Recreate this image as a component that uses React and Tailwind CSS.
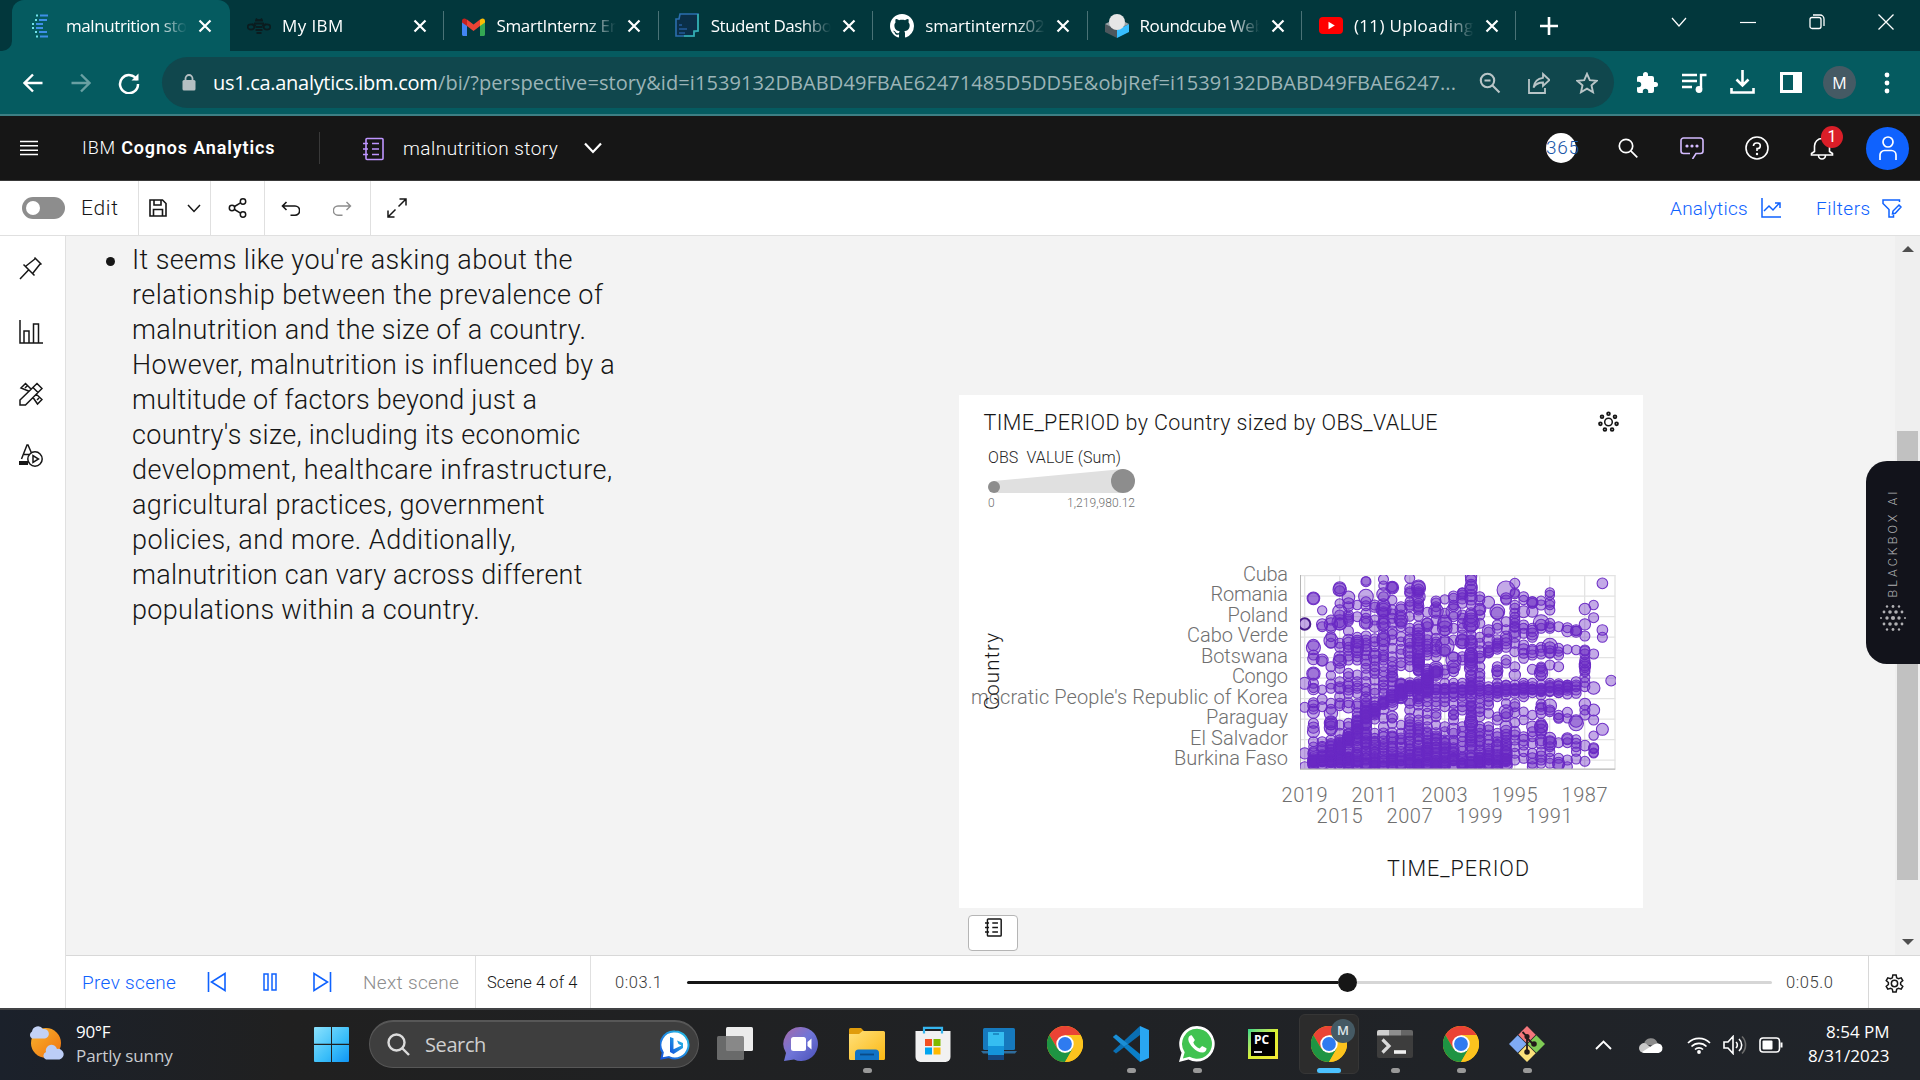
import React, { useLayoutEffect, useRef, useState } from "react";

/* ---------- text helper: spreads its letters over a given width ---------- */
function Fit({ w, className = "", children }) {
  const ref = useRef(null);
  const [gap, setGap] = useState(0);
  useLayoutEffect(() => {
    const el = ref.current;
    setGap((w - el.offsetWidth) / Math.max(1, el.textContent.length - 1));
  }, []);
  return (
    <span className={"block shrink-0 whitespace-nowrap " + className} style={{ width: w }}>
      <span ref={ref} style={{ letterSpacing: gap }}>{children}</span>
    </span>
  );
}

const UI = "font-['Open_Sans','Noto_Sans',sans-serif]";
const PLEX = "font-[Roboto,'Liberation_Sans',sans-serif] font-[350]";

function Svg({ w, h = w, vb, className = "", sw = 1.5, children }) {
  return (
    <svg width={w} height={h} viewBox={vb || `0 0 ${w} ${h}`} className={"block shrink-0 " + className}
      fill="none" stroke="currentColor" strokeWidth={sw}>
      {children}
    </svg>
  );
}

/* ---------- favicons ---------- */
const Cognos = () => (
  <Svg w={24} sw={1.8}>
    <g stroke="#3f8fe8">
      <path d="M10 1.5h8M9 6h8M6 10h7M6 14h7M9 18h8M10 22.5h8" />
    </g>
    <g stroke="#6fe0e8"><path d="M6 1.5h2M5 6h2M2 10h2M2 14h2M5 18h2M6 22.5h2" /></g>
  </Svg>
);
const Bee = () => (
  <Svg w={24} h={24} sw={1.6} className="text-[#0b1c1f]">
    <path d="M8 6.5h8M7 9.5h10M8.5 13h7M8.5 16h7M9.5 19h5" strokeWidth="2" />
    <path d="M9 4.500l1.500 1.500h3L15 4.500" />
    <ellipse cx="4" cy="13" rx="3.300" ry="2.600" /><ellipse cx="20" cy="13" rx="3.300" ry="2.600" />
    <path d="M5 10l4 1.500M19 10l-4 1.500" />
  </Svg>
);
const Gmail = () => (
  <Svg w={23} h={18} vb="0 0 23 18" className="mt-0.5">
    <g stroke="none">
      <path d="M0 3v13.500c0 .8.7 1.500 1.500 1.500H5V7z" fill="#4285f4" />
      <path d="M23 3v13.500c0 .8-.7 1.500-1.500 1.500H18V7z" fill="#34a853" />
      <path d="M5 8V1.500l6.500 5 6.500-5V8l-6.500 5z" fill="#ea4335" />
      <path d="M0 3c0-3 3-3 4-2l1 .7V8L0 4.500z" fill="#c5221f" />
      <path d="M23 3c0-3-3-3-4-2l-1 .7V8l5-3.500z" fill="#fbbc04" />
    </g>
  </Svg>
);
const Student = () => (
  <Svg w={25} vb="0 0 25 25" sw={1.6}>
    <path d="M5 1h18v17l-4 1v4H1V6h3z" stroke="#2b6fae" fill="#0a2f48" />
    <path d="M23 1v17h-4v5H9" stroke="#32b3ae" />
    <path d="M4 12h3M4 16h8M4 20h6" stroke="#1c4f86" strokeWidth="2" />
  </Svg>
);
const GitHub = () => (
  <Svg w={24} vb="0 0 16 16">
    <path stroke="none" fill="#fff" d="M8 0C3.580 0 0 3.580 0 8c0 3.540 2.290 6.530 5.470 7.590.4.070.55-.17.55-.38 0-.19-.01-.82-.01-1.490-2.010.37-2.530-.49-2.690-.94-.09-.23-.48-.94-.82-1.130-.28-.15-.68-.52-.01-.53.63-.01 1.080.58 1.230.82.72 1.210 1.870.87 2.330.66.070-.52.28-.87.51-1.070-1.780-.2-3.640-.89-3.640-3.950 0-.87.31-1.590.82-2.150-.08-.2-.36-1.020.08-2.120 0 0 .67-.21 2.200.82.64-.18 1.320-.27 2-.27s1.360.09 2 .27c1.530-1.040 2.200-.82 2.200-.82.44 1.100.16 1.920.08 2.120.51.56.82 1.270.82 2.150 0 3.070-1.870 3.750-3.650 3.950.29.25.54.73.54 1.480 0 1.070-.01 1.930-.01 2.200 0 .21.15.46.55.38A8.010 8.010 0 0 0 16 8c0-4.420-3.580-8-8-8z" />
  </Svg>
);
const Roundcube = () => (
  <Svg w={24} vb="0 0 24 24">
    <g stroke="none">
      <path d="M0 10l12 6v8L0 18z" fill="#4d575d" />
      <path d="M24 10l-12 6v8l12-6z" fill="#37beff" />
      <path d="M0 10l4-2 8 8zM24 10l-4-2-8 8z" fill="#9aa3a8" />
      <circle cx="12" cy="8" r="8" fill="#e6e6e6" />
    </g>
  </Svg>
);
const YouTube = () => (
  <Svg w={24} h={17}>
    <rect width="24" height="17" rx="4" fill="#f00" stroke="none" />
    <path d="M9.500 4.800v7.400l6.300-3.700z" fill="#fff" stroke="none" />
  </Svg>
);

const tabs = [
  ["malnutrition story", Cognos, 136],
  ["My IBM", Bee, 61],
  ["SmartInternz Email", Gmail, 146],
  ["Student Dashboard", Student, 146],
  ["smartinternz02/C", GitHub, 136],
  ["Roundcube Webmail", Roundcube, 157],
  ["(11) Uploading f", YouTube, 130],
];

function TabBar() {
  return (
    <div className={`flex h-[51px] bg-[#02373c] text-[17px] text-white ${UI}`}>
      <div className="w-3 shrink-0 bg-[#055b60]"><div className="h-full rounded-br-[10px] bg-[#02373c]" /></div>
      {tabs.map(([title, Icon, w], i) => (
        <div key={title} className={
          i === 0
            ? "flex h-full w-[218px] shrink-0 items-center rounded-t-[12px] bg-[#055b60] pl-[18px]"
            : "relative flex h-full w-[214.4px] shrink-0 items-center pl-[17px]"
        }>
          <div className="flex w-6 shrink-0 justify-center"><Icon /></div>
          <div className={
            i === 0
              ? "ml-3 w-[121px] overflow-hidden [mask-image:linear-gradient(to_right,black_76%,transparent_100%)]"
              : "ml-[11px] w-[120px] overflow-hidden [mask-image:linear-gradient(to_right,black_76%,transparent_100%)]"
          }>
            <Fit w={w} className="leading-6">{title}</Fit>
          </div>
          <Svg w={14} sw={2.2} className="ml-[11px]"><path d="M1.500 1.500l11 11M12.500 1.500l-11 11" /></Svg>
          {i > 0 && <div className="ml-auto h-[29px] w-px bg-[#4a7276]" />}
        </div>
      ))}
      <div className="flex h-full flex-1 items-end bg-[#055b60]"><div className="flex h-full flex-1 items-center rounded-bl-none bg-[#02373c]">
        <Svg w={18} sw={2.6} className="ml-[24px]"><path d="M9 0v18M0 9h18" /></Svg>
        <div className="mb-2 ml-auto mr-[26px] flex items-center gap-[53px]">
          <Svg w={16} sw={1.2}><path d="M1 4l7 8 7-8" /></Svg>
          <Svg w={16} sw={1.2}><path d="M0 8.500h16" /></Svg>
          <Svg w={16} sw={1.3}><rect x="1" y="3.500" width="11" height="11" rx="2" /><path d="M4 1h7a4 4 0 0 1 4 4v7" /></Svg>
          <Svg w={16} sw={1.3}><path d="M.5.5l15 15M15.500.5l-15 15" /></Svg>
        </div>
      </div></div>
    </div>
  );
}

function AddressBar() {
  return (
    <div className={`flex h-[65px] items-center border-b-2 border-[#3d7f84] bg-[#055b60] text-white ${UI}`}>
      <Svg w={20} sw={2.4} className="ml-[23px]"><path d="M19.500 10H2M10 1.500L1.500 10l8.500 8.500" /></Svg>
      <Svg w={20} sw={2.4} className="ml-[28px] text-[#69a0a3]"><path d="M.5 10H18M10 1.500l8.500 8.500-8.500 8.500" /></Svg>
      <Svg w={22} sw={2.5} className="ml-[27px]">
        <path d="M19 8A9 9 0 1 0 20 12" /><path d="M20.500 1.500v7h-7z" fill="currentColor" stroke="none" />
      </Svg>
      <div className="ml-[22px] flex h-[51px] w-[1452px] shrink-0 items-center rounded-full bg-[#10474d] text-xl">
        <Svg w={14} h={17} className="ml-5 text-[#b5bfc2]">
          <rect x=".5" y="6" width="13" height="10.500" rx="1.500" fill="currentColor" stroke="none" />
          <path d="M3.500 7V4.500a3.500 3.500 0 0 1 7 0V7" strokeWidth="1.800" />
        </Svg>
        <Fit w={225} className="ml-[17px] leading-7">us1.ca.analytics.ibm.com</Fit>
        <Fit w={1018} className="leading-7 text-[#9cb4b7]">/bi/?perspective=story&amp;id=i1539132DBABD49FBAE62471485D5DD5E&amp;objRef=i1539132DBABD49FBAE6247...</Fit>
        <div className="ml-[23px] flex items-center gap-[26.500px] text-[#b9c5c7]">
          <Svg w={22} sw={2.1}><circle cx="8.500" cy="8.500" r="6.700" /><path d="M13.500 13.500l7 7M5.500 8.500h6" /></Svg>
          <Svg w={22} sw={1.8}><path d="M1 7v14h16v-5" /><path d="M15 2l6.500 6-6.500 6v-3.500c-5 0-7.500 1.500-9.500 5 .6-5 3.500-9 9.500-9.700z" /></Svg>
          <Svg w={22} sw={1.9}><path d="M11 1.800l2.800 6.400 6.900.6-5.200 4.600 1.500 6.800-6-3.600-6 3.600 1.500-6.800L1.300 8.800l6.900-.6z" /></Svg>
        </div>
      </div>
      <Svg w={24} vb="0 0 24 24" className="ml-[21px]"><path stroke="none" fill="currentColor" d="M20.500 11H19V7a2 2 0 0 0-2-2h-4V3.500a2.500 2.500 0 0 0-5 0V5H4a2 2 0 0 0-2 2v3.800h1.500a2.700 2.700 0 0 1 0 5.400H2V20a2 2 0 0 0 2 2h3.800v-1.500a2.700 2.700 0 0 1 5.400 0V22H17a2 2 0 0 0 2-2v-4h1.500a2.500 2.500 0 0 0 0-5z" /></Svg>
      <Svg w={25} h={22} sw={2.4} className="ml-[23px]"><path d="M0 3h15M0 9h15M0 15h10M19 17V3h5.500" /><circle cx="17" cy="17.500" r="3.400" fill="currentColor" stroke="none" /></Svg>
      <Svg w={25} h={25} sw={2.6} className="ml-[23px]"><path d="M12.500 0v15M6.500 9.500l6 6 6-6M1.500 18v4.500h22V18" /></Svg>
      <Svg w={22} h={21} className="ml-[25px]"><path d="M1.500 1.500h19v18h-19z" strokeWidth="3" /><path d="M13 1h8v19h-8z" fill="currentColor" stroke="none" /></Svg>
      <div className="ml-[21px] flex h-[33px] w-[33px] shrink-0 items-center justify-center rounded-full bg-[#455a64] text-base">M</div>
      <Svg w={6} h={22} className="ml-[28px]"><g fill="currentColor" stroke="none"><circle cx="3" cy="3" r="2.400" /><circle cx="3" cy="11" r="2.400" /><circle cx="3" cy="19" r="2.400" /></g></Svg>
    </div>
  );
}

const Notebook = ({ w, h, className, sw = 1.6 }) => (
  <Svg w={w} h={h} vb="0 0 21 23" sw={sw} className={className}>
    <rect x="3" y="1" width="17" height="21" rx="1" />
    <path d="M0 6h5M0 11.500h5M0 17h5M9 6h7M9 11.500h7M9 17h7" />
  </Svg>
);

function AppHeader() {
  return (
    <div className={`flex h-[65px] items-center border-b border-[#393939] bg-[#161616] text-white ${PLEX}`}>
      <Svg w={18} h={16} sw={1.4} className="ml-5"><path d="M0 1.500h18M0 5.800h18M0 10.200h18M0 14.500h18" /></Svg>
      <Fit w={192} className="ml-11 text-lg">IBM <b className="font-semibold">Cognos Analytics</b></Fit>
      <div className="ml-[45px] h-8 w-px bg-[#393939]" />
      <Notebook w={21} h={24} className="ml-[43px] mt-0.5 text-[#be95ff]" />
      <Fit w={155} className="ml-[19px] mt-0.5 text-[19px]">malnutrition story</Fit>
      <Svg w={18} h={12} sw={2.2} className="ml-[26px]"><path d="M1 1.500l8 8.500 8-8.500" /></Svg>
      <div className="ml-auto flex items-center">
        <div className="flex h-[30px] w-[30px] items-center rounded-full bg-white text-[#1b57a8]">
          <Fit w={33.500} className="text-[19px]">365</Fit>
        </div>
        <Svg w={20} sw={1.7} className="ml-[42px]"><circle cx="8" cy="8" r="6.700" /><path d="M12.800 12.800l6.500 6.500" /></Svg>
        <Svg w={24} h={22} sw={1.6} className="ml-[42px] text-[#d4bbff]"><path d="M10 16.500H3.500A2.500 2.500 0 0 1 1 14V3.500A2.500 2.500 0 0 1 3.500 1h17A2.500 2.500 0 0 1 23 3.500V14a2.500 2.500 0 0 1-2.500 2.500H16L12.500 22" /><g fill="currentColor" stroke="none"><circle cx="7" cy="9" r="1.600" /><circle cx="12" cy="9" r="1.600" /><circle cx="17" cy="9" r="1.600" /></g></Svg>
        <Svg w={24} sw={1.6} className="ml-[41px]"><circle cx="12" cy="12" r="11" /><path d="M8.500 10V9.500A3 3 0 0 1 11.500 7h1a2.800 2.800 0 0 1 0 5.600H12V15" /><circle cx="12" cy="18" r="1.200" fill="currentColor" stroke="none" /></Svg>
        <div className="relative ml-[41px]">
          <Svg w={24} h={24} sw={1.6}><path d="M4.500 15.500V10a7.500 7.500 0 0 1 15 0v5.500l3 2V19H1.500v-1.500zM8.500 19.500a3.500 3.500 0 0 0 7 0M12 0v2.500" /></Svg>
          <div className="absolute -top-[10px] left-[11px] flex h-[22px] w-[22px] items-center justify-center rounded-full bg-[#da1e28] text-base font-normal">1</div>
        </div>
        <div className="ml-[32px] mr-[11px] flex h-[43px] w-[43px] items-center justify-center rounded-full bg-[#0f62fe]">
          <Svg w={20} h={24} sw={1.7}><circle cx="10" cy="6" r="5" /><path d="M2 24v-5a4.500 4.500 0 0 1 4.500-4.500h7A4.500 4.500 0 0 1 18 19v5" /></Svg>
        </div>
      </div>
    </div>
  );
}

function EditBar() {
  return (
    <div className={`flex h-[55px] items-center border-b border-[#e0e0e0] bg-white text-[#161616] ${PLEX}`}>
      <div className="ml-[22px] flex h-[22px] w-[43px] shrink-0 items-center rounded-full bg-[#8d8d8d] pl-1"><div className="h-3.5 w-3.5 rounded-full bg-white" /></div>
      <Fit w={37} className="ml-4 mt-0.5 text-[21px]">Edit</Fit>
      <div className="ml-5 flex h-full w-[72px] items-center border-l border-[#e0e0e0] pl-2.5">
        <Svg w={18} sw={1.6}><path d="M1 1h12.500L17 4.500V17H1zM5 1v5h7V1M4.500 17v-6.500h9V17" /></Svg>
        <Svg w={14} h={9} className="ml-5"><path d="M1 1l6 6.500L13 1" /></Svg>
      </div>
      <div className="flex h-full w-[54px] items-center justify-center border-l border-[#e0e0e0]">
        <Svg w={19} h={20} sw={1.5} className="-ml-px"><circle cx="15" cy="3.500" r="2.700" /><circle cx="4" cy="10" r="2.700" /><circle cx="15" cy="16.500" r="2.700" /><path d="M6.500 8.500l6-3.600M6.500 11.500l6 3.600" /></Svg>
      </div>
      <div className="flex h-full w-[106px] items-center border-l border-[#e0e0e0] pl-4 pt-px">
        <Svg w={19} h={16} sw={1.6}><path d="M5.500 1L1.500 5l4 4M1.500 5H14a4 4 0 0 1 0 9.200H9.500" /></Svg>
        <Svg w={19} h={16} sw={1.4} className="ml-[33px] text-[#8d8d8d]"><path d="M13.500 1l4 4-4 4M17.500 5H5a4 4 0 0 0 0 9.200h4.500" /></Svg>
      </div>
      <div className="flex h-full items-center border-l border-[#e0e0e0] pl-4">
        <Svg w={20} sw={1.5}><path d="M12.500 1H19v6.500M19 1l-7.500 7.500M7.500 19H1v-6.500M1 19l7.500-7.500" /></Svg>
      </div>
      <div className="ml-auto flex items-center text-[19px] text-[#0f62fe]">
        <Fit w={78} className="mt-0.5">Analytics</Fit>
        <Svg w={20} h={20} sw={1.5} className="ml-[13px]"><path d="M1 0v19h19M3 13l5-5 4 4 6.500-7M14 5h5v5" /></Svg>
        <Fit w={54} className="ml-[35px] mt-0.5">Filters</Fit>
        <Svg w={20} h={19} sw={1.5} className="ml-3 mr-[18px]"><path d="M17.500 3V1H1v3.500l6 6V18h4.500v-3M19 8l-2-2-6 6-.5 2.800 2.800-.5z" /></Svg>
      </div>
    </div>
  );
}

function SideBar() {
  return (
    <div className="flex w-[66px] shrink-0 flex-col border-r border-[#e0e0e0] bg-white pl-[19px] text-[#161616]">
      <Svg w={24} className="mt-5"><path d="M15.500 1.500l7 7M16.500 2.500L7 10M21.500 7.500L14 17M4.500 8.500l11 11M9.500 14L1 23" /></Svg>
      <Svg w={24} className="mt-[40px]"><path d="M1 0v23h23M5 23V11h5v12M14.500 23V4h5v19" /></Svg>
      <Svg w={24} className="mt-[38px]"><path d="M1 18L18 1.500l5 5L6.500 23H1zM9.500 9L2 6l4.500-4.500L12 7M14 15.500l4.500 6.500 4.500-4.500-6-5.500M6 6l2-2M18 18l2-2M14 5.500l5 5" /></Svg>
      <Svg w={24} className="mt-[37px]"><path d="M2.500 16L8 2h1l3.500 8M5 11.500h5" /><path d="M0 20h9" strokeWidth="4" /><circle cx="16" cy="16" r="7.200" fill="#fff" /><path d="M14 12.500v7l5.500-3.500z" /></Svg>
    </div>
  );
}

const story = [
  ["It seems like you're asking about the", 441],
  ["relationship between the prevalence of", 471],
  ["malnutrition and the size of a country.", 454],
  ["However, malnutrition is influenced by a", 483],
  ["multitude of factors beyond just a", 405],
  ["country's size, including its economic", 448],
  ["development, healthcare infrastructure,", 480],
  ["agricultural practices, government", 413],
  ["policies, and more. Additionally,", 383],
  ["malnutrition can vary across different", 450],
  ["populations within a country.", 348],
];

/* ---------- bubble chart ----------
   One entry per year column, in thirds of a pixel from the plot's origin.
   "y", "y:r" is one bubble; "a-b/step:r" is a run of them. */
const columns = [
  "370:18 442 580:17 620",
  "115:19 115:17 263:21 255:17 285 297:17 341:20 341:17 370 387:17 385:13 428 437:17 457:18 447 490 503:17 515:18 545 560-620/9",
  "151:14 193:17 200 300:18 303 389:14 418 440 545 560-615/8:14",
  "180:15 193:20 205 230 242:21 250 320 346:14 372 385 430 448 460:20 485:18 490:20 492:17 503:20 512 540 550-620/8:15",
  "89:20 92:15 83:18 130:14 155:21 165 187:23 192:18 188 250 262 290:17 300:18 305:20 325 365 383:18 385 410 430 437:15 495 520 540-615/7:15",
  "112:19 130:17 140 165 172:15 178 183 213 240:17 250:18 262 270 288 300 340 350 370 380:17 390 400 428 440:19 490 500 520 530-620/7",
  "135:14 170 232:15 245:19 248:17 258:20 268:18 275:18 290:15 300 345 365 378 385 400 432 440:17 458 470 485-620/7",
  "65:15 63:13 110:22 125 137 160 175 188:20 190 228:15 240 250 260 270:17 285 300:17 312 325 345 365 385 395 410 420-620/8",
  "135:15 142 180 200:17 235:14 245 260 280 290:19 300 320 330 340 360 388:17 400 425 440-480/8 520 535-620/7",
  "58:15 77:14 103:20 110 135:19 148:23 150:20 155 160 178 190 193:20 200 222 235:19 240:20 255:17 270 285 290 300:15 318 335 350:16 365 375 385 400 420-450/8 475 500 520-620/8",
  "83:19 83:16 80 120:14 150 162 175 190 213 223 240 265 290 305 320 330:15 350 350:17 338 365 378 395-440/9:17 470:17 475:14 490 518 530-620/9",
  "140:15 150:18 165:15 178:21 183:17 190 200 230 245:14 268 282:15 308 317 370-420/8:17 495:14 520 535-620/9:14",
  "55:15 85 95 100 125:14 135 140 170:14 205 215:14 242:19 250 262 275:20 290 300 320 370-400/7 415:22 430 450 475 485 495:16 505:17 515:18 525-620/7",
  "80:20 85:21 88:16 95 100 110:20 118 130 138:16 145:15 150 168:15 200-340/8:17 240:20 300:18 330 365 375-440/9 460 480 495 505-620/7",
  "157:15 190:16 192:18 200 225 240:16 252 260:16 268 275 285 330-400/6:17 410 425 440 460 480 500 515-620/8",
  "123:15 128:14 140 153:22 155 180 210 235 245:14 255:17 268:15 275:16 290 325-350/9:18 385:14 400 410 425:15 438 460 470 495:14 520-620/7",
  "118:14 160 185:20 193:22 205:22 212 240 258:28 270:17 275:15 330 342:15 370 385:14 400 412 425 440 500 515 540-620/8",
  "108:15 115 135:14 155:23 140 170 205 240 290 300:23 320:20 325:16 335 370 385:14 400 410 430 450:14 463:15 465 480 510:20 520:15 540-620/10",
  "97:14 100:15 115:17 105 130 165 175 190 205 225 240:18 245:21 250 290 300 370 380 390:15 408 425 440 450 500 515:16 530 545 560-620/10",
  "50:17 60-120/9:17 135:14 160:17 170:19 180:21 190:25 195:20 205 225 240-270/9:16 280:18 285:20 290:18 297:20 303:20 310:17 318:18 325:20 345-480/9:15 485:18 490:20 495:18 505 515-620/7:16",
  "110:15 120 148:18 150:15 165 190 232 250 275:18 290:17 295 320 340 350 365:15 378 392 400 415 430 445:15 455 470 500:15 510:17 520 530-620/8",
  "127:18 213:19 215:14 240:18 262-285/8 380:15 390 410 425:14 435:15 460 500 510 525 540-620/9",
  "155:22 160:19 195 205 240:16 248-275/7:15 320 332:17 335 345 370:15 380 392 400 410 470:14 480 520 532:17 545-620/9",
  "90:27 115:17 120 185 208:14 230:17 240:17 250:17 262:15 300:15 310:14 375:15 385 395 405 430:14 455:21 460 470 500-620/8:16",
  "70:15 98:14 102:14 135:14 145 160 172 180 190 200-240/9:15 250 275 320:15 345:17 375 385 400 432 440 458 488 515:16 525:15 540 560 580 600",
  "110:15 120:14 155:18 195 205 220 255 268:17 280 295 370 383 390 400 410 455:14 480:14 530:15 540:17 555 575 595",
  "125:15 127:17 130:15 155:17 205:15 213:17 222:18 232 268:15 275:18 285 328 370:15 380 390 398 465:14 500:17 515 530 550:16 580 595:17 610 620",
  "122:14 135:15 187:23 195:17 205 262:15 272:17 282 320:14 325:15 333:18 340:20 348:14 373:14 385 395 405 433:15 440:14 447:17 460 490 500:20 500:18 510:18 520 540:17 550:17 575:14 590:17 600 610",
  "97:14 105:14 127:15 135:14 150 190 205 200 258:23 262:17 275:18 280 315 370 380 393:14 437:20 450:15 455 535:18 545:18 550:20 560 575 595 610",
  "200:15 265:15 275:14 285 320:15 370:14 380:17 387:15 398 465:14 473:14 475:15 548 595 610:18 615:17",
  "203:15 213:17 268:14 375:15 385 392:14 402 457:15 475:14 535:17 538:16 548 600:15 620",
  "210:16 215:17 213:14 270:14 365:15 375 380 390 400 483:19 490:22 538:14 550:15 560:15 575:14 597:15",
  "147:17 193:17 228:15 270 273:15 282 300:15 308:16 315:17 320:17 330 335 352 367:15 380 432:17 450 465:15 557:16 604:15",
  "135:14 173:15 282:15 384:19 450:18 480:15 527:14 563:15 566:15 578:14 580:14",
  "70:16 210:16 232:15 508:18",
  "362:16",
];

/* dense trend through the middle of the plot: [x, y] */
const trend = [[90, 605], [110, 598], [125, 590], [140, 580], [155, 572], [170, 562], [185, 552], [200, 538], [212, 524], [222, 510], [232, 498], [244, 482], [255, 468], [267, 456], [278, 447], [290, 440], [310, 425], [325, 412], [340, 404], [355, 396], [370, 392], [385, 384], [400, 377], [415, 373], [430, 364], [440, 356], [452, 348], [468, 334]];

function bubbles() {
  const out = [];
  let seed = 7;
  const rnd = () => ((seed = (seed * 16807) % 2147483647) / 2147483647);
  columns.forEach((col, k) => {
    const cx = 74 + k * 26.27;
    col.split(" ").forEach((t) => {
      const [pos, r] = t.split(":");
      const radius = r ? +r : 15;
      if (pos.includes("-")) {
        const [range, step] = pos.split("/");
        const [a, b] = range.split("-").map(Number);
        for (let y = a; y <= b; y += +step * (0.3 + 1.5 * rnd())) out.push([cx, y, radius - 1 + 4 * rnd()]);
      } else out.push([cx, +pos, radius]);
    });
    // low counts cluster along the bottom axis and along one middle band
    if (k >= 1 && k <= 23) for (let i = 0; i < 4; i++) out.push([cx, 595 + 25 * rnd(), 16]);
    if (k >= 11 && k <= 30) for (let i = 0; i < 3; i++) out.push([cx, 376 + 22 * rnd(), 15]);
  });
  trend.forEach(([x, y]) => {
    const cx = 74 + Math.round((x - 74) / 26.27) * 26.27;
    out.push([cx, y, 17], [cx, y + 8, 16]);
  });
  return out;
}
const allBubbles = bubbles();

const countries = [["Cuba", 45, 581], ["Romania", 77.5, 601], ["Poland", 60.5, 622], ["Cabo Verde", 101, 642], ["Botswana", 87, 663], ["Congo", 56, 683], ["mocratic People's Republic of Korea", 317, 704], ["Paraguay", 82, 724], ["El Salvador", 98, 745], ["Burkina Faso", 114, 765]];
const years = ["2019", "2015", "2011", "2007", "2003", "1999", "1995", "1991", "1987"];

function ChartCard() {
  return (
    <div className={`h-[513px] w-[684px] bg-white ${PLEX}`}>
      <svg width="684" height="513" viewBox="959 395 684 513" className="block" fill="#6f6f6f">
        <text x="983.500" y="430" textLength="454" fontSize="21.500" fill="#161616">TIME_PERIOD by Country sized by OBS_VALUE</text>
        <g fill="none" stroke="#161616" strokeWidth="1.500">
          <circle cx="1608.500" cy="422" r="3.800" />
          {[0, 1, 2, 3, 4, 5, 6].map((i) => (
            <circle key={i} cx={1608.5 + 8.3 * Math.sin(i * 0.8976)} cy={422 - 8.3 * Math.cos(i * 0.8976)} r="1.400" strokeWidth="1.800" />
          ))}
        </g>
        <text x="988" y="463" textLength="133" fontSize="16" fill="#262626" xmlSpace="preserve">OBS&#160; VALUE (Sum)</text>
        <path d="M994 481L1123 469V493H994z" fill="#e0e0e0" />
        <circle cx="994" cy="487" r="6" fill="#8d8d8d" />
        <circle cx="1123" cy="481" r="12" fill="#8d8d8d" />
        <g fontSize="12"><text x="988" y="507">0</text><text x="1067" y="507" textLength="68">1,219,980.12</text></g>
        <g fontSize="20">
          {countries.map(([n, w, y]) => <text key={n} x={1288 - w} y={y} textLength={w}>{n}</text>)}
          {years.map((n, i) => <text key={n} x={1281.5 + i * 35} y={i % 2 ? 823 : 801.500} textLength="46">{n}</text>)}
        </g>
        <text x="1387" y="876" textLength="142" fontSize="21.500" fill="#161616">TIME_PERIOD</text>
        <text transform="translate(999 710) rotate(-90)" textLength="77" fontSize="20.500" fill="#161616">Country</text>
        <svg x="1300" y="575" width="316" height="195" viewBox="60 45 948 585">
          <g stroke="#e3e3e3" strokeWidth="4">
            {[0, 1, 2, 3, 4, 5, 6, 7, 8].map((i) => <path key={i} d={`M${74 + i * 105} 45V626`} />)}
            {[0, 1, 2, 3, 4, 5, 6, 7, 8, 9].map((i) => <path key={"h" + i} d={`M60 ${47 + i * 61.5}H1006`} />)}
            <path d="M1005 45V626" />
          </g>
          <path d="M61.500 45V628" stroke="#b5b5b5" strokeWidth="3" />
          <svg x="60" y="45" width="948" height="582" viewBox="60 45 948 582">
            <g fill="#6929c4" fillOpacity=".4" stroke="#6929c4" strokeOpacity=".95" strokeWidth="3.200">
              {allBubbles.map(([x, y, r], i) => <circle key={i} cx={x} cy={y} r={r} />)}
            </g>
            <circle cx="74" cy="192" r="17" fill="#6929c4" fillOpacity=".4" stroke="#491d8b" strokeWidth="6" />
          </svg>
          <path d="M60 627.500H1006" stroke="#b5b5b5" strokeWidth="3.500" />
        </svg>
      </svg>
    </div>
  );
}

function ScrollBar() {
  return (
    <div className="relative flex w-[25px] shrink-0 flex-col items-center bg-[#efefef]">
      <Svg w={12} h={6} className="mt-[10px] text-[#4f4f4f]"><path d="M0 6L6 0l6 6z" fill="currentColor" stroke="none" /></Svg>
      <div className="mt-[179px] h-[449px] w-[21px] bg-[#c1c1c1]" />
      <Svg w={12} h={6} className="mt-auto mb-[10px] text-[#4f4f4f]"><path d="M0 0l6 6 6-6z" fill="currentColor" stroke="none" /></Svg>
      <div className="absolute right-0 top-[225px] flex h-[203px] w-[54px] flex-col items-center rounded-l-[21px] bg-[#12131b] text-[#b0b0b3]">
        <div className="mt-[30px] flex h-[107px] w-4 items-center justify-center">
          <div className={`-rotate-90 text-[12.500px] ${PLEX}`}><Fit w={106}>BLACKBOX AI</Fit></div>
        </div>
        <Svg w={26} h={26} className="mt-[7px]">
          <g fill="currentColor" stroke="none">
            {[[7, 1.2], [13, 1.4], [19, 1.2]].map(([x, r]) => <g key={x}><circle cx={x} cy="1.500" r={r} /><circle cx={x} cy="24.500" r={r} /></g>)}
            {[[4, 1.4], [10, 1.8], [16, 1.8], [22, 1.4]].map(([x, r]) => <g key={x}><circle cx={x} cy="7" r={r} /><circle cx={x} cy="19" r={r} /></g>)}
            {[[1, 1], [7, 1.7], [13, 2.1], [19, 1.7], [25, 1]].map(([x, r]) => <circle key={x} cx={x} cy="13" r={r} />)}
          </g>
        </Svg>
      </div>
    </div>
  );
}

function Player() {
  return (
    <div className={`flex h-[53px] shrink-0 items-center border-t border-[#d8d8d8] bg-white text-[#0f62fe] ${PLEX}`}>
      <Fit w={94} className="ml-4 mt-0.5 text-[19px]">Prev scene</Fit>
      <Svg w={20} h={20} sw={1.6} className="ml-[31px]"><path d="M1.500 0v20M18 1.500v17L4.500 10z" /></Svg>
      <Svg w={16} h={18} sw={1.5} className="ml-[35px]"><rect x="2" y="1" width="4" height="16" /><rect x="10" y="1" width="4" height="16" /></Svg>
      <Svg w={20} h={20} sw={1.6} className="ml-[34px]"><path d="M18.500 0v20M2 1.500v17L15.500 10z" /></Svg>
      <Fit w={96} className="ml-[31px] mt-0.5 text-[19px] text-[#8d8d8d]">Next scene</Fit>
      <div className="ml-[16px] flex h-full w-[115px] items-center border-l border-[#e0e0e0] pl-[11px] text-[#161616]"><Fit w={91} className="mt-[3px] text-[16.500px]">Scene 4 of 4</Fit></div>
      <div className="flex h-full flex-1 items-center border-l border-[#e0e0e0] text-[#393939]">
        <Fit w={47} className="ml-6 mt-[3px] text-[16.500px]">0:03.1</Fit>
        <div className="ml-[25px] flex w-[1085px] shrink-0 items-center pt-px">
          <div className="h-[3px] w-[651px] rounded-l bg-[#161616]" />
          <div className="h-[19px] w-[19px] shrink-0 rounded-full bg-[#161616]" />
          <div className="h-[3px] flex-1 rounded-r bg-[#d6d6d6]" />
        </div>
        <Fit w={47} className="ml-[14px] mt-[3px] text-[16.500px]">0:05.0</Fit>
      </div>
      <div className="flex h-full w-[52px] shrink-0 items-center justify-center border-l border-[#d8d8d8] pt-0.5 text-[#161616]">
        <Svg w={21} vb="0 0 32 32">
          <path strokeWidth="2.300" d="M13.500 2h5l.8 4.300 2.700 1.500 4.200-1.400 2.400 4.200-3.300 2.900v3l3.300 2.900-2.400 4.200-4.200-1.400-2.700 1.500-.8 4.300h-5l-.8-4.300L10 22.200l-4.200 1.400-2.400-4.200 3.300-2.900v-3l-3.300-2.900L5.800 6.400 10 7.800l2.700-1.500z" transform="translate(0 1)" />
          <circle cx="16" cy="16" r="4.800" strokeWidth="2.300" />
        </Svg>
      </div>
    </div>
  );
}

/* ---------- taskbar ---------- */
const Chrome = () => (
  <Svg w={36}>
    <g stroke="none">
      <circle cx="18" cy="18" r="18" fill="#fbbc05" />
      <path d="M18 18L10.200 22.500 2.400 9A18 18 0 0 1 33.600 9H18z" fill="#ea4335" />
      <path d="M2.400 9l7.800 13.500L18 27l7.800-4.500L18 36A18 18 0 0 1 2.400 9z" fill="#1e9443" />
      <path d="M33.600 9H18l7.800 13.500L18 36A18 18 0 0 0 33.600 9z" fill="#fcc31e" />
      <circle cx="18" cy="18" r="8.700" fill="#fff" /><circle cx="18" cy="18" r="6.900" fill="#2f7bf0" />
    </g>
  </Svg>
);
const TaskView = () => (
  <Svg w={36}><g stroke="none"><rect x="9" y="1" width="27" height="24" rx="1.500" fill="#ececec" /><rect x="0" y="10" width="27" height="24" rx="1.500" fill="#777" opacity=".85" /></g></Svg>
);
const Teams = () => (
  <Svg w={36}>
    <defs><linearGradient id="tm" x1="0" x2="1" y1="0" y2="1"><stop offset="0" stopColor="#a86aa8" /><stop offset=".5" stopColor="#6f75d8" /><stop offset="1" stopColor="#4a50b8" /></linearGradient></defs>
    <g stroke="none"><path d="M18 1a17 17 0 1 1-7 32.500L1 35l2-8A17 17 0 0 1 18 1z" fill="url(#tm)" /><rect x="8" y="11" width="15" height="14" rx="2.500" fill="#fff" /><path d="M24.500 16l4-3.500v11l-4-3.500z" fill="#fff" /></g>
  </Svg>
);
const Explorer = () => (
  <Svg w={36}>
    <defs><linearGradient id="fo" x1="0" x2="1" y1="0" y2="1"><stop offset="0" stopColor="#ffe07a" /><stop offset="1" stopColor="#fbb813" /></linearGradient></defs>
    <g stroke="none"><path d="M0 3.500A1.500 1.500 0 0 1 1.500 2H12l3 3-4 5H0z" fill="#e09c0c" /><path d="M0 8h10l3.500-3H34.500A1.500 1.500 0 0 1 36 6.500v26a1.500 1.500 0 0 1-1.500 1.500h-33A1.500 1.500 0 0 1 0 32.500z" fill="url(#fo)" /><path d="M6 34v-7a3.500 3.500 0 0 1 3.500-3.500h17A3.500 3.500 0 0 1 30 27v7z" fill="#1173c5" /><path d="M11 28.500h14" stroke="#0a4a86" strokeWidth="1.800" /></g>
  </Svg>
);
const Store = () => (
  <Svg w={36}>
    <g stroke="none"><path d="M.5 5h35v26a5 5 0 0 1-5 5h-25a5 5 0 0 1-5-5z" fill="#f1f1f1" /><path d="M10 13h7v7h-7z" fill="#f25022" /><path d="M18.500 13h7v7h-7z" fill="#7fba00" /><path d="M10 21.500h7v7h-7z" fill="#00a4ef" /><path d="M18.500 21.500h7v7h-7z" fill="#ffb900" /></g>
    <path d="M9 7.500V1.800h18v5.700" stroke="#35b5ee" strokeWidth="2.200" />
  </Svg>
);
const Remote = () => (
  <Svg w={36}><g stroke="none"><rect x="2" y="2" width="32" height="22" rx="1.500" fill="#1679bd" /><path d="M0 25h36l-2 2.500H2z" fill="#2f6c9c" /><rect x="7" y="6" width="16" height="28" rx="1" fill="#1494da" /><path d="M7 6h16v14H7z" fill="#35bdf1" /><path d="M7 29h16v5H7z" fill="#15477f" /><path d="M12 8h6" stroke="#167eb8" strokeWidth="1.500" /></g></Svg>
);
const VSCode = () => (
  <Svg w={36}><g stroke="none"><path d="M0 11l3-2.500L27 28v8z" fill="#0b7fc7" /><path d="M0 25l3 2.500L27 9V0z" fill="#0a6fb3" /><path d="M27 0l9 4v28l-9 4z" fill="#29a6f2" /><path d="M0 11l3-2.500L15 18l-4 2.500z" fill="#1b8fd6" /></g></Svg>
);
const WhatsApp = () => (
  <Svg w={36}><g stroke="none"><path d="M18 0a17.800 17.800 0 1 1-8.500 33.500L0 36l2.600-9.300A17.800 17.800 0 0 1 18 0z" fill="#fff" /><path d="M18 2.800a15 15 0 1 1-7.500 28l-6.600 1.800 1.800-6.400A15 15 0 0 1 18 2.800z" fill="#40c351" /><path d="M12.700 9.300c-1-.4-3.700 1.200-3.400 4.200.4 4.800 7.500 13 14.200 13.100 2.400 0 4.200-2 4-4.300l-4.400-2.300-2.500 2.600c-3-1-5.300-3.400-6.300-6l1.600-2.500z" fill="#fff" /></g></Svg>
);
const PyCharm = () => (
  <div className="flex h-[30px] w-[30px] items-center justify-center bg-gradient-to-br from-[#21d789] via-[#d9ef31] to-[#f5e937]">
    <div className={`flex h-[24px] w-[24px] flex-col bg-black pl-[3px] pt-px text-[12px] font-bold leading-[13px] text-white ${UI}`}><span>PC</span><div className="mt-[5px] h-[2px] w-2 bg-[#ddd]" /></div>
  </div>
);
const Terminal = () => (
  <Svg w={36}><g stroke="none"><rect x="0" y="4" width="36" height="28" rx="2" fill="#3d3d3d" /><path d="M0 9.500V6a2 2 0 0 1 2-2h10v5.500z" fill="#cfcfcf" /><path d="M12 4h12v5.500H12z" fill="#8f8f8f" /><path d="M24 4h10a2 2 0 0 1 2 2v3.500H24z" fill="#666" /></g><path d="M5.500 13.500l6.500 6.500-6.500 6.500" stroke="#d9d9d9" strokeWidth="3.200" /><path d="M17 26h12" stroke="#f0f0f0" strokeWidth="3.600" /></Svg>
);
const Git = () => (
  <Svg w={36}>
    <g stroke="none"><path d="M18 0l8.700 8.700L18 17.400 9.300 8.700z" fill="#f4777c" /><path d="M27.300 9.300L36 18l-8.700 8.700L18.600 18z" fill="#80cc56" /><path d="M8.700 9.300l8.700 8.700-8.700 8.700L0 18z" fill="#7fabf5" /><path d="M18 18.600l8.700 8.700L18 36l-8.700-8.700z" fill="#fbe07a" /></g>
    <g stroke="#231a1a" strokeWidth="1.800"><path d="M13.500 6l4.500 4.500V26M18 12l6 6" /><circle cx="18" cy="10.500" r="1.700" fill="#231a1a" /><circle cx="25" cy="18" r="1.900" fill="#231a1a" /><circle cx="18" cy="26" r="1.900" fill="#231a1a" /></g>
  </Svg>
);
const Badged = () => (
  <div className="relative"><Chrome /><div className={`absolute -right-2 -top-[7px] flex h-6 w-6 items-center justify-center rounded-full bg-[#455a64] text-[13px] font-semibold text-[#dfe5e8] ${UI}`}>M</div></div>
);
const apps = [[TaskView, 0], [Teams, 0], [Explorer, 1], [Store, 0], [Remote, 0], [Chrome, 0], [VSCode, 1], [WhatsApp, 1], [PyCharm, 0], [Badged, 2], [Terminal, 1], [Chrome, 1], [Git, 1]];

function Taskbar() {
  return (
    <div className={`flex h-[72px] border-t-2 border-[#414345] bg-gradient-to-r from-[#1b212b] via-[#202020] via-15% to-[#20242a] text-white ${UI}`}>
      <div className="flex w-[314px] shrink-0 items-center pl-7">
        <Svg w={36} className="mb-1">
          <defs><linearGradient id="sn" x1="0" x2="1" y1="0" y2="1"><stop offset="0" stopColor="#f9b42d" /><stop offset="1" stopColor="#f0720f" /></linearGradient></defs>
          <g stroke="none"><circle cx="18" cy="18" r="15" fill="url(#sn)" /><path d="M4 13.500a4 4 0 0 1 0-7A6 6 0 0 1 15 4a4.800 4.800 0 0 1 2 9.500z" fill="#c3d2f5" /><path d="M18 34.500a4 4 0 0 1 0-7.500A5.500 5.500 0 0 1 29 24a5.300 5.300 0 0 1 2.500 10.500z" fill="#bccdf6" /></g>
        </Svg>
        <div className="mb-0.5 ml-3 flex flex-col text-[17px] leading-6"><Fit w={35}>90°F</Fit><Fit w={97} className="text-[#c9ccd0]">Partly sunny</Fit></div>
      </div>
      <Svg w={35} className="mt-[17px]">
        <defs><linearGradient id="wn" x1="0" x2="1" y1="0" y2="1"><stop offset="0" stopColor="#8be2fd" /><stop offset=".6" stopColor="#39bdf9" /><stop offset="1" stopColor="#0f95f5" /></linearGradient></defs>
        <path stroke="none" fill="url(#wn)" d="M1 0h16v16.800H0V1a1 1 0 0 1 1-1zM18 0h16a1 1 0 0 1 1 1v15.800H18zM0 18h17v17H1a1 1 0 0 1-1-1zM18 18h17v16a1 1 0 0 1-1 1H18z" />
      </Svg>
      <div className="ml-5 mt-2.5 flex h-12 w-[330px] shrink-0 items-center rounded-full border border-t-2 border-[#575757] bg-[#3e3e3e] pl-[17px]">
        <Svg w={23} sw={2.4} className="text-[#dcdcdc]"><circle cx="9.500" cy="9.500" r="8" /><path d="M15.500 15.500l6.500 6.500" /></Svg>
        <Fit w={61} className="ml-[15px] text-xl leading-6 text-[#cfcfcf]">Search</Fit>
        <Svg w={30} className="ml-auto mr-2">
          <defs><linearGradient id="bg" x1="0" x2="1" y1="1" y2="0"><stop offset="0" stopColor="#1452dc" /><stop offset="1" stopColor="#29c3e6" /></linearGradient></defs>
          <path d="M15 1.500a13.500 13.500 0 1 1-6 25.600L1.500 28.500l1.300-6A13.500 13.500 0 0 1 15 1.500z" fill="#fff" stroke="url(#bg)" strokeWidth="2" />
          <path stroke="none" fill="url(#bg)" d="M10 7l3.500 1.300v11l8-3.800-3-1.500-1.500-3.500 6 2.500v5L13.500 24 10 22z" />
        </Svg>
      </div>
      <div className="ml-[3px] flex">
        {apps.map(([Icon, s], i) => (
          <div key={i} className="flex w-[66px] shrink-0 flex-col items-center pt-1">
            <div className={s === 2 ? "flex h-[60px] w-[60px] flex-col items-center rounded-md border border-[#363636] bg-[#2c2c2c]" : "flex h-[60px] w-[60px] flex-col items-center border border-transparent"}>
              <div className="mt-[11px] flex h-9 items-center"><Icon /></div>
              {s === 1 && <div className="mt-[6px] h-[5px] w-[9px] rounded-full bg-[#999]" />}
              {s === 2 && <div className="mt-[6px] h-[5px] w-6 rounded-full bg-[#4cc2ff]" />}
            </div>
          </div>
        ))}
      </div>
      <div className="ml-auto mr-[30px] flex items-center">
        <Svg w={17} h={10} sw={1.9}><path d="M1 9l7.500-7.500L16 9" /></Svg>
        <Svg w={24} h={16} className="ml-[27px]"><g stroke="none"><path d="M5 7a7 7 0 0 1 13.500-1L24 11z" fill="#8c8c8c" /><path d="M0 11a5 5 0 0 1 7-4.500L19 16H5a5 5 0 0 1-5-5z" fill="#c9c9c9" /><path d="M3 15l11-7a6 6 0 0 1 5-1.500 4.800 4.800 0 0 1 .5 9.500H5z" fill="#fff" /></g></Svg>
        <Svg w={24} h={18} sw={1.7} className="ml-[24px]"><path d="M1 7a15.500 15.500 0 0 1 22 0M4.500 10.500a10.500 10.500 0 0 1 15 0M8 13.500a5.700 5.700 0 0 1 8 0" /><circle cx="12" cy="16" r="1.900" fill="currentColor" stroke="none" /></Svg>
        <Svg w={24} h={20} sw={1.6} className="ml-3"><path d="M1 7h4l5-5.500v17L5 13H1zM13 7a4 4 0 0 1 0 6M16 4a8 8 0 0 1 0 12" /><path d="M19 1.500a12 12 0 0 1 0 17" stroke="#6b6b6b" /></Svg>
        <Svg w={24} h={16} sw={1.6} className="ml-3"><rect x="1" y="1" width="19.500" height="14" rx="3" /><rect x="3.500" y="3.500" width="10" height="9" rx="1" fill="currentColor" stroke="none" /><path d="M22.500 5.500v5" strokeWidth="2" /></Svg>
        <div className="mb-0.5 ml-[25px] flex flex-col items-end text-[17px] leading-6"><Fit w={64}>8:54 PM</Fit><Fit w={82}>8/31/2023</Fit></div>
      </div>
    </div>
  );
}

export default function App() {
  return (
    <div className="flex h-[1080px] w-[1920px] flex-col overflow-hidden bg-white">
      <TabBar />
      <AddressBar />
      <AppHeader />
      <EditBar />
      <div className="flex min-h-0 flex-1">
        <SideBar />
        <div className="flex min-w-0 flex-1 flex-col">
          <div className="flex min-h-0 flex-1 bg-[#f3f3f3]">
            <div className={`flex w-[893px] shrink-0 pl-10 pt-[7px] text-[27px] leading-[35px] text-[#161616] ${PLEX}`}>
              <div className="mr-[17px] mt-[14px] h-[9px] w-[9px] rounded-full bg-[#161616]" />
              <div>{story.map(([t, w]) => <Fit key={t} w={w}>{t}</Fit>)}</div>
            </div>
            <div className="flex flex-1 flex-col pt-[159px]">
              <ChartCard />
              <div className="ml-[9px] mt-[7px] flex h-[36px] w-[50px] justify-center rounded-sm border border-[#b5b5b5] bg-white pt-0.5 text-[#161616]">
                <Notebook w={17} h={19} sw={1.8} />
              </div>
            </div>
            <ScrollBar />
          </div>
          <Player />
        </div>
      </div>
      <Taskbar />
    </div>
  );
}
